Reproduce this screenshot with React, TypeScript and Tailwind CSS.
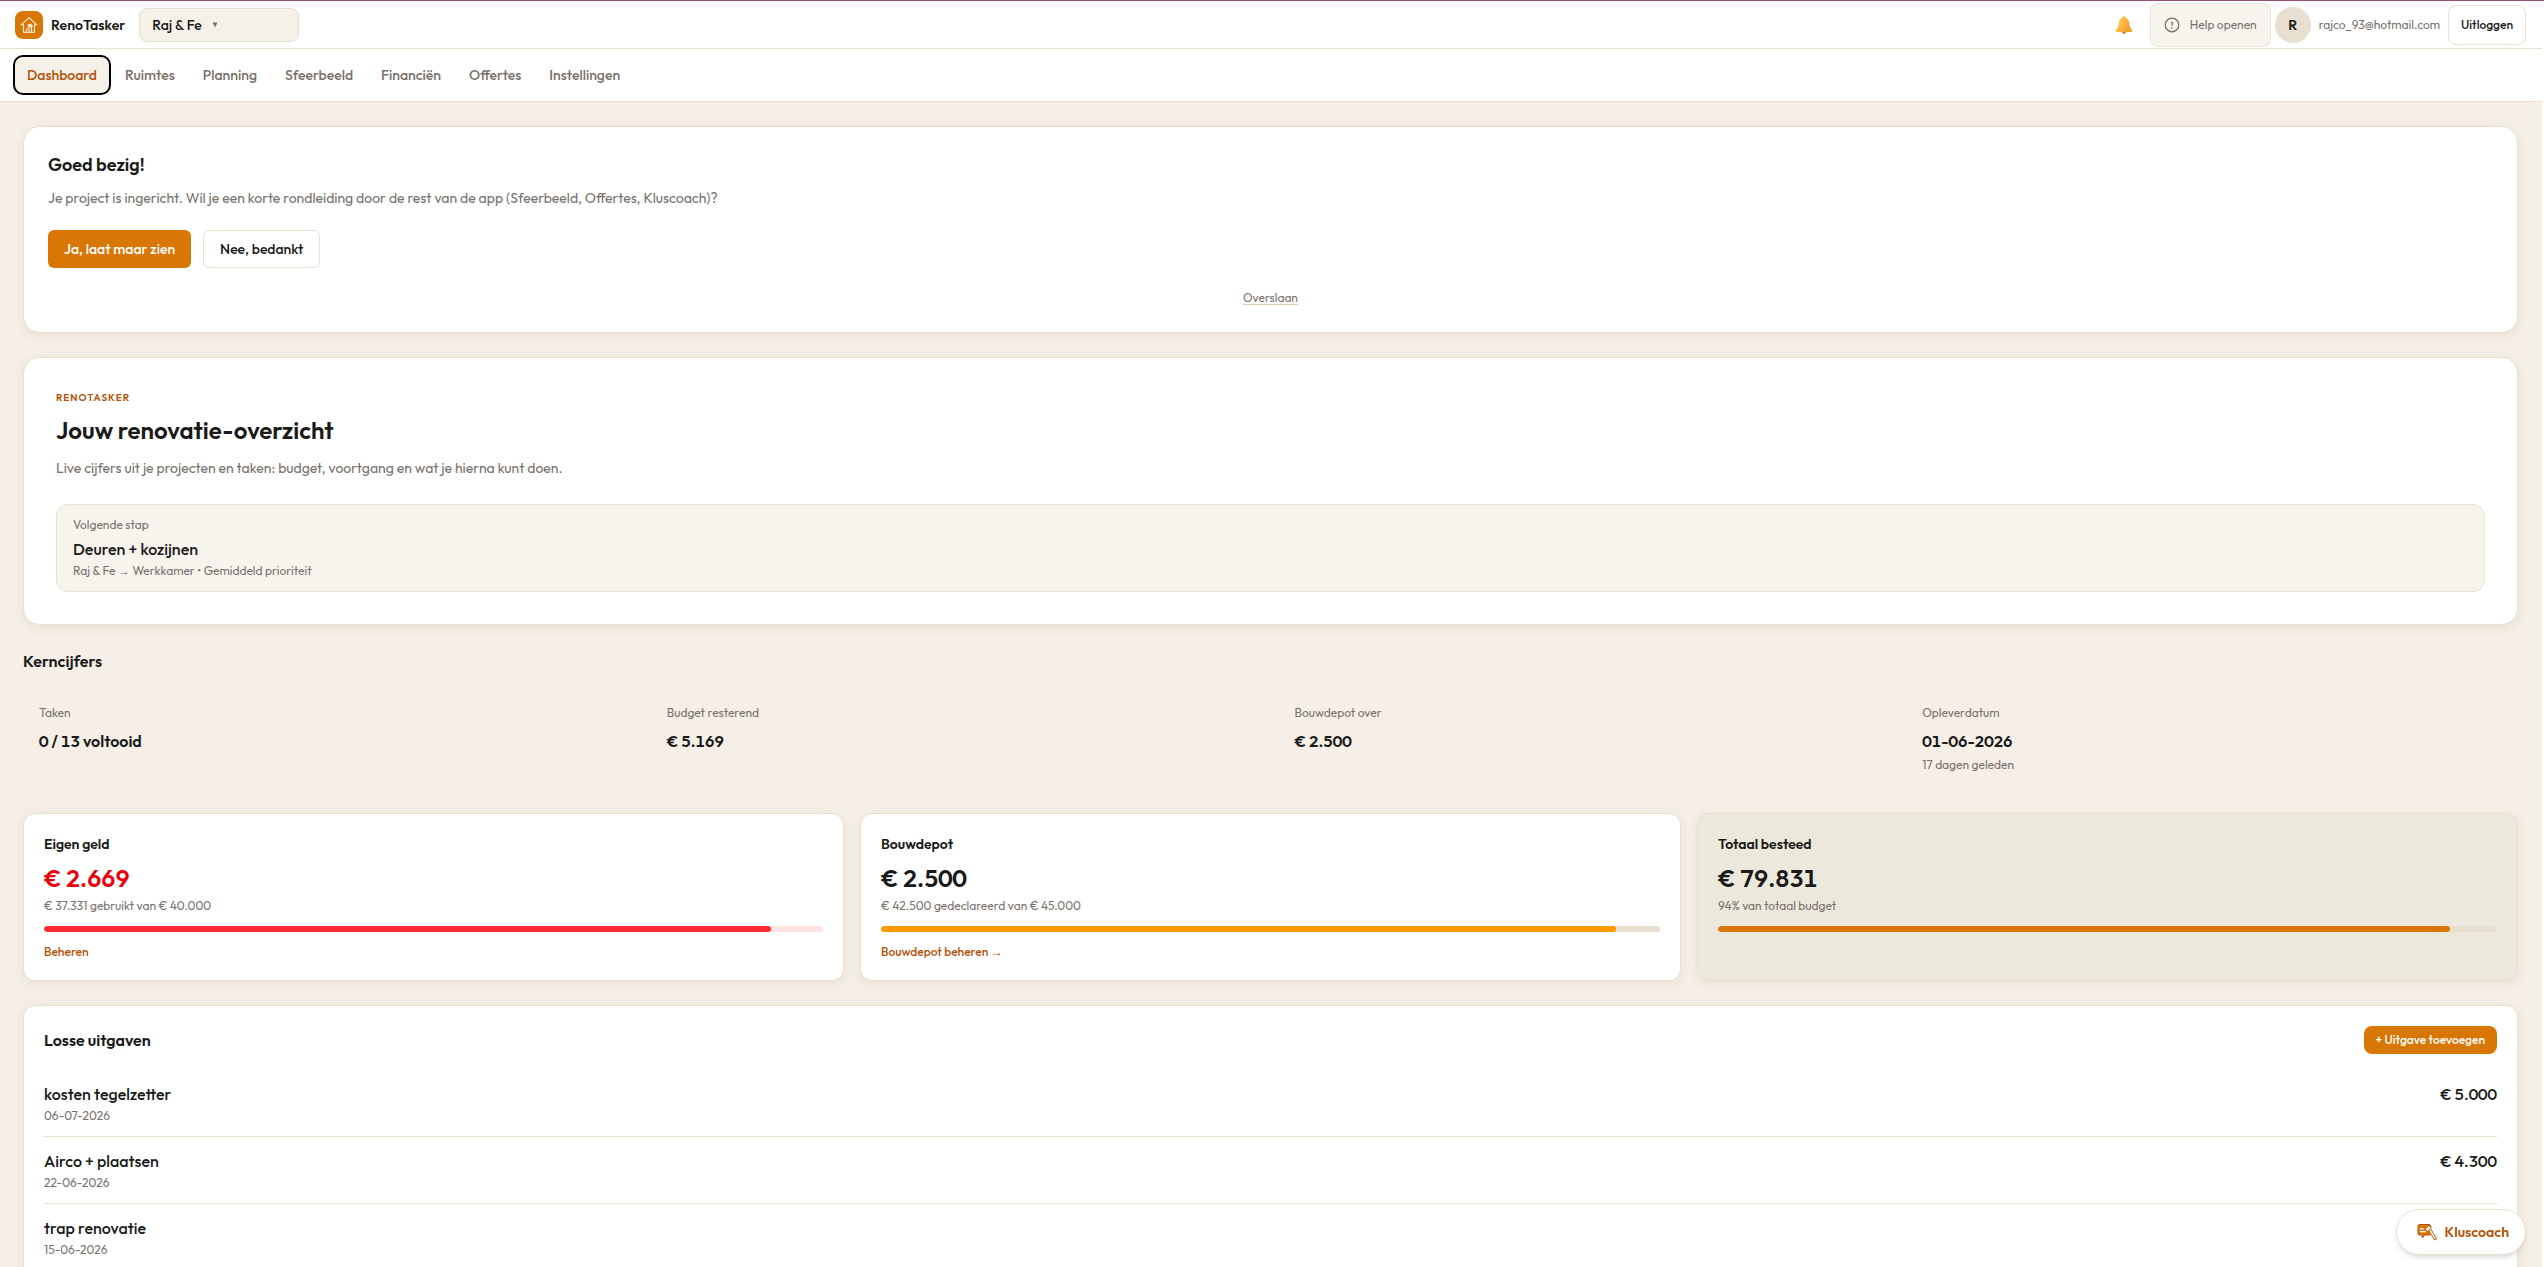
import type { ReactNode } from "react";

const navItems = ["Dashboard", "Ruimtes", "Planning", "Sfeerbeeld", "Financiën", "Offertes", "Instellingen"];

const stats = [
  { label: "Taken", value: "0 / 13 voltooid" },
  { label: "Budget resterend", value: "€ 5.169" },
  { label: "Bouwdepot over", value: "€ 2.500" },
  { label: "Opleverdatum", value: "01-06-2026", note: "17 dagen geleden" },
];

const expenses = [
  { name: "kosten tegelzetter", date: "06-07-2026", amount: "€ 5.000" },
  { name: "Airco + plaatsen", date: "22-06-2026", amount: "€ 4.300" },
  { name: "trap renovatie", date: "15-06-2026" },
];

function HouseIcon() {
  return (
    <svg viewBox="0 0 18 18" className="size-[18px]" fill="none" stroke="#fff3dc" strokeWidth="1.1" strokeLinecap="round" strokeLinejoin="round" aria-hidden="true">
      <path d="M1.2 8.8 9 1.6l7.800 7.200h-2.300v7.400H3.500V8.800z" />
      <path d="M6.400 16.200v-2.600L10 10.200" />
      <path d="M7.800 9.200l2.600-1 1.800 1.800-1 1.400z" fill="#fff3dc" />
      <path d="M11.600 16v-3.400M8.800 16v-1.800l1.400-1.200" />
    </svg>
  );
}

function BellIcon() {
  return (
    <svg viewBox="0 0 18 18" className="size-[18px]" aria-hidden="true">
      <defs>
        <linearGradient id="bell" x1="0" x2="1" y1="0" y2="0.4">
          <stop offset="0" stopColor="#ffd56b" />
          <stop offset="0.5" stopColor="#fdb940" />
          <stop offset="1" stopColor="#ee9f3a" />
        </linearGradient>
      </defs>
      <circle cx="9" cy="16" r="2" fill="#d9822b" />
      <circle cx="9" cy="1.6" r="1.4" fill="#f0a52f" />
      <path d="M9 1.400c3.200 0 4.900 2.300 5.200 5.200.3 3.400.8 5.300 2.700 7.200.9.9.5 2.200-.7 2.200H1.800c-1.200 0-1.600-1.300-.7-2.200 1.900-1.900 2.400-3.800 2.700-7.200C4.100 3.700 5.800 1.400 9 1.400z" fill="url(#bell)" />
      <path d="M1.200 13.800h15.600" stroke="#f7a52c" strokeWidth="0.8" />
    </svg>
  );
}

function HelpIcon() {
  return (
    <svg viewBox="0 0 16 16" className="size-4" fill="none" stroke="#78716c" strokeWidth="1.3" strokeLinecap="round" aria-hidden="true">
      <circle cx="8" cy="8" r="6.8" />
      <path d="M7.300 5.500c.6-.3 1.500 0 1.300.9L8 8.400" />
      <path d="M7.800 10.800v.1" strokeWidth="1.5" />
    </svg>
  );
}

function CoachIcon() {
  return (
    <svg viewBox="0 0 20 18" className="h-[18px] w-5" aria-hidden="true">
      <path d="M2.500 1.500h9.500a1.500 1.500 0 0 1 1.500 1.500v7.500a1.500 1.500 0 0 1-1.500 1.500H7.500L5.300 15v-3H2.500A1.500 1.500 0 0 1 1 10.500V3a1.500 1.500 0 0 1 1.500-1.500z" fill="#d97706" stroke="#b45309" strokeWidth="1" />
      <path d="M2.800 5.800h4M2.800 8.600h6" stroke="#fff" strokeWidth="1.3" />
      <path d="M12 5.500l6 10" stroke="#b45309" strokeWidth="3.4" strokeLinecap="round" />
      <path d="M12 5.500l6 10" stroke="#fff7ed" strokeWidth="1.6" strokeLinecap="round" />
      <path d="M8 6.400l3.200-3.600 2.600.6.200 2-3.600 3.200z" fill="#fff7ed" stroke="#b45309" strokeWidth="0.9" strokeLinejoin="round" />
    </svg>
  );
}

function Arrow() {
  return <span className="font-['Liberation_Sans',sans-serif] leading-none">→</span>;
}

function Card({ className, label, children }: { className: string; label: string; children: ReactNode }) {
  return (
    <section aria-label={label} className={`border border-[#e7e0d0] shadow-[0_3px_12px_rgba(120,90,30,0.09)] ${className}`}>
      {children}
    </section>
  );
}

type BudgetProps = {
  title: string;
  amount: string;
  note: string;
  percent: number;
  card: string;
  amountColor: string;
  track: string;
  fill: string;
  link?: ReactNode;
};

function BudgetCard({ title, amount, note, percent, card, amountColor, track, fill, link }: BudgetProps) {
  return (
    <Card label={title} className={`rounded-xl p-5 ${card}`}>
      <h3 className="text-sm font-semibold">{title}</h3>
      <p className={`mt-2 text-2xl font-semibold tabular-nums ${amountColor}`}>{amount}</p>
      <p className="mt-1 text-xs text-[#78716c]">{note}</p>
      <div role="progressbar" aria-label={title} aria-valuenow={percent} aria-valuemin={0} aria-valuemax={100} className={`mt-3 h-1.5 overflow-hidden rounded-full ${track}`}>
        <div className={`h-full rounded-full ${fill}`} style={{ width: `${percent}%` }} />
      </div>
      {link && (
        <a href="#beheren" className="mt-3 block text-xs font-medium text-[#b45309]">{link}</a>
      )}
    </Card>
  );
}

export default function App() {
  return (
    <div className="h-screen overflow-hidden border-t border-t-[#96506f] bg-white pr-0.5 font-['Outfit','Lato',sans-serif] text-[#1a1a1a]">
      <header className="flex h-12 items-center border-b border-[#e7dfd0] bg-white pr-4 pl-[15px]">
        <a href="#home" className="flex items-center gap-2 text-sm font-semibold">
          <span className="flex size-7 items-center justify-center rounded-lg bg-[#d97706]">
            <HouseIcon />
          </span>
          RenoTasker
        </a>
        <div className="relative ml-3.5">
          <select aria-label="Project" className="h-[34px] w-40 appearance-none rounded-lg border border-[#e7dfd0] bg-[#f5f0e8] px-3 text-sm font-medium">
            <option>Raj &amp; Fe</option>
          </select>
          <svg viewBox="0 0 6 6" className="pointer-events-none absolute top-3.5 left-[73px] size-1.5" aria-hidden="true">
            <path d="M0.500 0.500h5L3 5.500z" fill="#78716c" />
          </svg>
        </div>
        <div className="ml-auto flex items-center gap-1 text-xs">
          <button aria-label="Meldingen" className="flex size-11 items-center justify-center">
            <BellIcon />
          </button>
          <button className="flex h-11 items-center gap-2.5 rounded-lg border border-[#e9e3d8] bg-[#f7f4ee] px-[13px] text-[#78716c]">
            <HelpIcon />
            Help openen
          </button>
          <span className="flex size-9 items-center justify-center rounded-full bg-[#e7dfd0] text-sm font-semibold">R</span>
          <span className="mx-1 text-[#78716c]">rajco_93@hotmail.com</span>
          <button className="h-10 rounded-lg border border-[#e7e0d0] px-3 font-medium">Uitloggen</button>
        </div>
      </header>

      <nav aria-label="Hoofdmenu" className="flex gap-1 border-b border-[#e7dfd0] bg-white px-[15px] py-2">
        {navItems.map((item, i) => (
          <a
            key={item}
            href={`#${item.toLowerCase()}`}
            aria-current={i === 0 ? "page" : undefined}
            className={
              i === 0
                ? "flex h-9 items-center rounded-lg bg-[#f5f0e8] px-3 text-sm font-medium text-[#b45309] outline-2 outline-black"
                : "flex h-9 items-center rounded-lg px-3 text-sm font-medium text-[#78716c]"
            }
          >
            {item}
          </a>
        ))}
      </nav>

      <main className="flex min-h-screen flex-col gap-6 bg-[#f5efe7] py-6 pr-6 pl-[23px]">
        <Card label="Rondleiding" className="flex flex-col rounded-2xl bg-white p-6">
          <h2 className="text-lg leading-7 font-semibold">Goed bezig!</h2>
          <p className="mt-2 text-sm leading-[23px] text-[#78716c]">
            Je project is ingericht. Wil je een korte rondleiding door de rest van de app (Sfeerbeeld, Offertes, Kluscoach)?
          </p>
          <div className="mt-5 flex gap-3 text-sm font-medium">
            <button className="h-[38px] rounded-md bg-[#d97706] px-4 text-white">Ja, laat maar zien</button>
            <button className="h-[38px] rounded-md border border-[#e7e0d0] bg-white px-4">Nee, bedankt</button>
          </div>
          <button className="mt-5 self-center text-xs leading-5 text-[#78716c] underline decoration-[#d9cdb8] underline-offset-2">Overslaan</button>
        </Card>

        <Card label="Overzicht" className="rounded-2xl bg-white p-8">
          <p className="text-[10px] leading-4 font-semibold tracking-widest text-[#b45309]">RENOTASKER</p>
          <h1 className="mt-2 text-2xl font-semibold">Jouw renovatie-overzicht</h1>
          <p className="mt-3 text-sm text-[#78716c]">
            Live cijfers uit je projecten en taken: budget, voortgang en wat je hierna kunt doen.
          </p>
          <div className="mt-[26px] rounded-xl border border-[#e7e2d6] bg-[#f7f4ee] px-4 py-3">
            <p className="text-xs text-[#78716c]">Volgende stap</p>
            <p className="mt-1 text-base font-medium">Deuren + kozijnen</p>
            <p className="mt-0.5 text-xs text-[#78716c]">Raj &amp; Fe <Arrow /> Werkkamer • Gemiddeld prioriteit</p>
          </div>
        </Card>

        <section aria-labelledby="kerncijfers">
          <h2 id="kerncijfers" className="text-base font-semibold">Kerncijfers</h2>
          <dl className="mt-4 grid grid-cols-4 gap-4">
            {stats.map((s) => (
              <div key={s.label} className="p-4">
                <dt className="text-xs text-[#78716c]">{s.label}</dt>
                <dd className="mt-2 text-base font-semibold tabular-nums">{s.value}</dd>
                {s.note && <dd className="mt-1 text-xs text-[#78716c]">{s.note}</dd>}
              </div>
            ))}
          </dl>
        </section>

        <div className="grid grid-cols-3 gap-4">
          <BudgetCard title="Eigen geld" amount="€ 2.669" note="€ 37.331 gebruikt van € 40.000" percent={93.3} card="bg-white" amountColor="text-[#e7000b]" track="bg-[#ffe2e2]" fill="bg-[#fb2c36]" link="Beheren" />
          <BudgetCard title="Bouwdepot" amount="€ 2.500" note="€ 42.500 gedeclareerd van € 45.000" percent={94.4} card="bg-white" amountColor="text-[#1a1a1a]" track="bg-[#e7dfd0]" fill="bg-[#fe9a00]" link={<>Bouwdepot beheren <Arrow /></>} />
          <BudgetCard title="Totaal besteed" amount="€ 79.831" note="94% van totaal budget" percent={94} card="bg-[#ede8dc]" amountColor="text-[#1a1a1a]" track="bg-[#e7dfd0]" fill="bg-[#d97706]" />
        </div>

        <Card label="Losse uitgaven" className="rounded-xl bg-white p-5">
          <div className="flex h-7 items-center justify-between">
            <h2 className="text-base font-semibold">Losse uitgaven</h2>
            <button className="h-7 rounded-lg bg-[#d97706] px-3 text-xs font-medium text-white">+ Uitgave toevoegen</button>
          </div>
          <ul className="mt-4 divide-y divide-[#e7dfd0]">
            {expenses.map((e) => (
              <li key={e.name} className="flex justify-between py-3">
                <div>
                  <p className="text-base font-medium">{e.name}</p>
                  <p className="mt-0.5 text-xs text-[#78716c]">{e.date}</p>
                </div>
                {e.amount && <p className="text-base font-medium tabular-nums">{e.amount}</p>}
              </li>
            ))}
          </ul>
        </Card>
      </main>

      <button className="fixed right-[18px] bottom-3 flex h-[46px] items-center gap-2 rounded-full border border-[#e7e0d0] bg-white pr-4 pl-5 text-sm font-semibold text-[#b45309] shadow-md">
        <CoachIcon />
        Kluscoach
      </button>
    </div>
  );
}
